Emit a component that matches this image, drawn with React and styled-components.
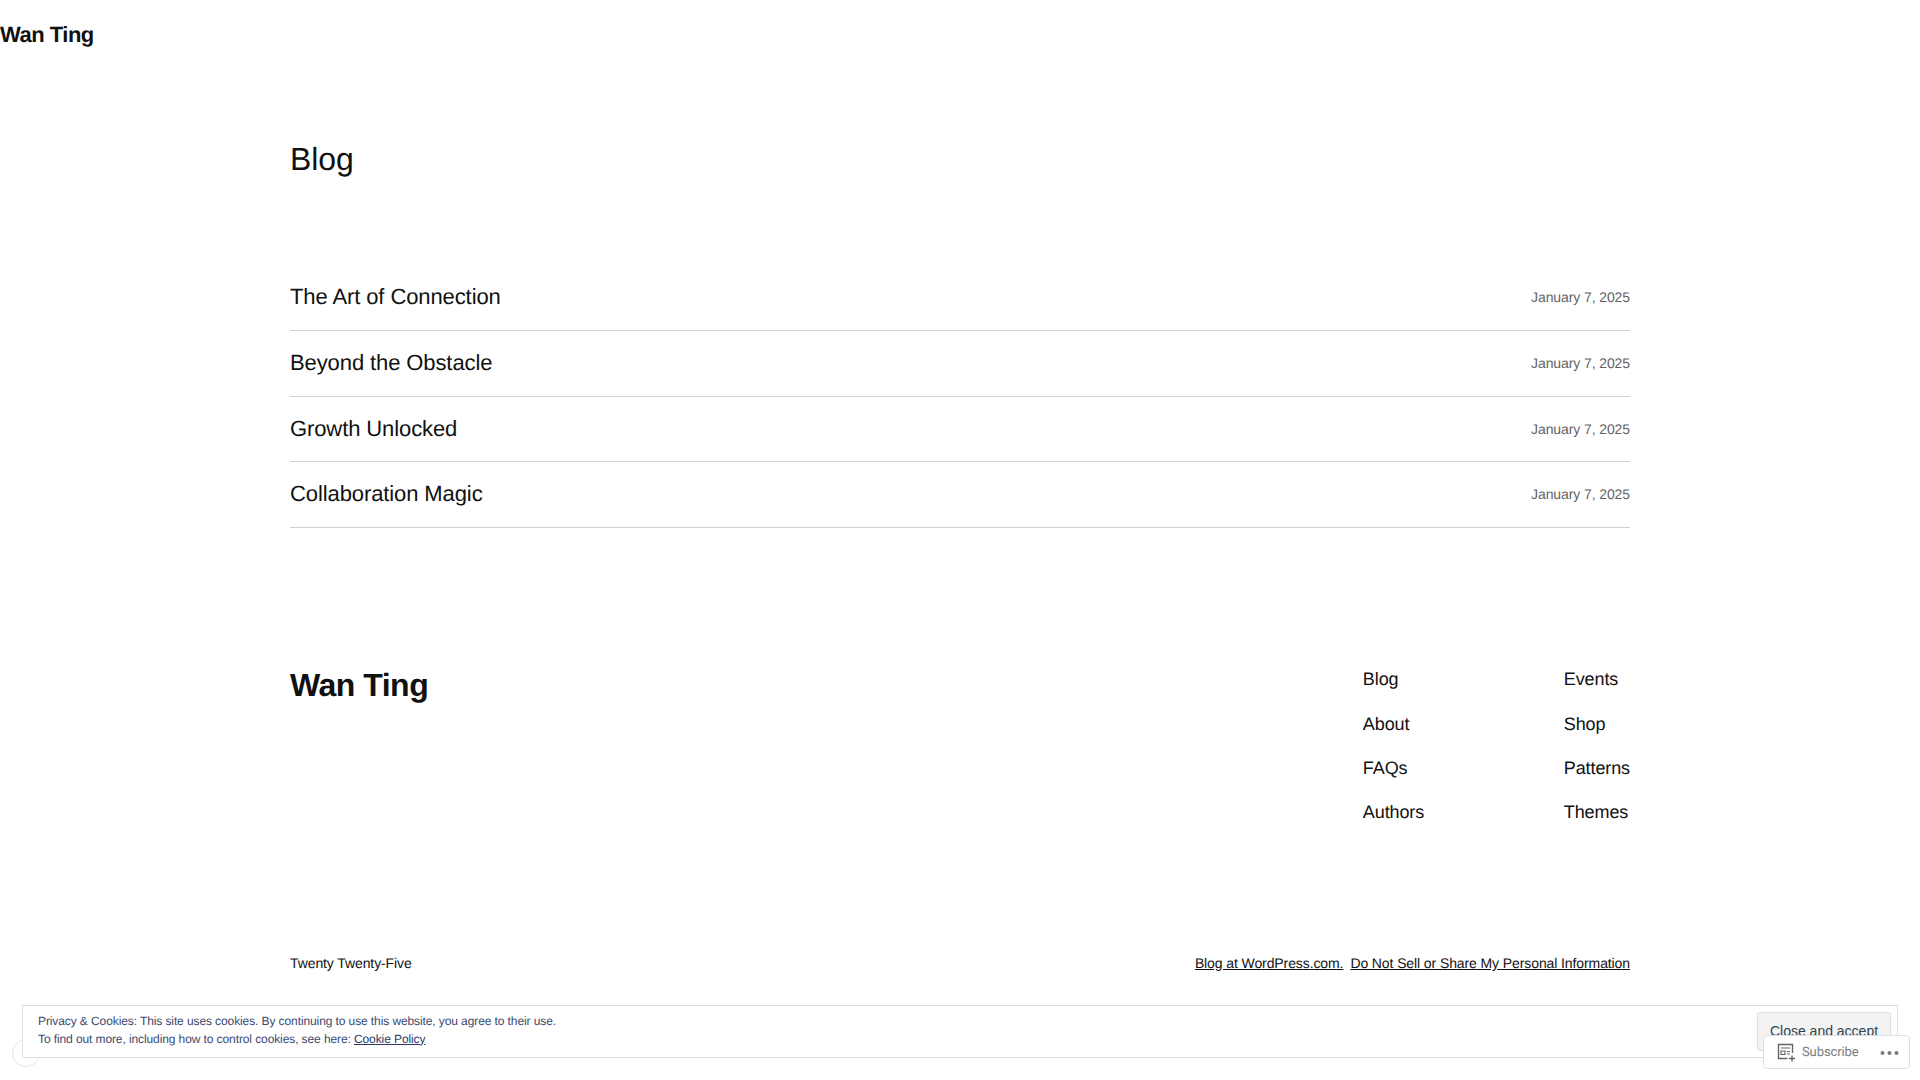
import React from "react";
import styled, { createGlobalStyle } from "styled-components";

const Global = createGlobalStyle`
  html, body { margin: 0; padding: 0; background: #fff; }
  body {
    font-family: "Liberation Sans", Arial, sans-serif;
    color: #111;
    letter-spacing: -0.1px;
    text-rendering: geometricPrecision;
    overflow: hidden;
  }
  a { color: inherit; }
`;

const Page = styled.div`
  height: 1080px;
  overflow: hidden;
`;

const Header = styled.header`
  height: 70px;
  display: flex;
  align-items: center;
`;

const SiteTitle = styled.div`
  font-size: 22px;
  font-weight: 700;
  letter-spacing: -0.5px;
  line-height: 1;
`;

const Main = styled.main`
  width: 1340px;
  margin: 0 auto;
`;

const Heading = styled.h1`
  margin: 0;
  padding-top: 67px;
  font-size: 32px;
  font-weight: 400;
  line-height: 44px;
`;

const PostList = styled.div`
  margin-top: 84.2px;
`;

const PostRow = styled.div`
  display: flex;
  align-items: center;
  justify-content: space-between;
  height: 64.07px;
  padding-bottom: 0.6px;
  border-bottom: 1px solid #d0d0d0;
`;

const PostTitle = styled.div`
  font-size: 22px;
`;

const PostDate = styled.div`
  font-size: 14px;
  color: #636363;
`;

const Footer = styled.footer`
  margin-top: 138.5px;
  display: flex;
  justify-content: space-between;
`;

const FooterTitle = styled.div`
  font-size: 32px;
  font-weight: 700;
  letter-spacing: -0.5px;
  line-height: 38px;
`;

const NavColumns = styled.div`
  display: flex;
  gap: 139.6px;
`;

const NavColumn = styled.div`
  display: flex;
  flex-direction: column;
  gap: 18px;
`;

const NavLink = styled.a`
  font-size: 18px;
  line-height: 26.3px;
  text-decoration: none;
`;

const FooterBottom = styled.div`
  margin-top: 127.6px;
  display: flex;
  justify-content: space-between;
  font-size: 14px;
  line-height: 20px;
`;

const FooterLinks = styled.div`
  display: flex;
  gap: 7px;
`;

const CookieBar = styled.div`
  position: fixed;
  left: 22px;
  right: 22px;
  bottom: 22px;
  height: 53px;
  box-sizing: border-box;
  border: 1px solid #dedede;
  background: #fff;
  display: flex;
  align-items: center;
  justify-content: space-between;
  padding: 0 6px 0 15px;
`;

const CookieText = styled.div`
  font-size: 12px;
  line-height: 18px;
  color: #3b4a70;
  margin-top: -4px;
`;

const CookieLink = styled.a`
  color: #2c3a63;
  text-decoration: underline;
`;

const CloseButton = styled.button`
  height: 39px;
  width: 134px;
  padding: 0 0 1px;
  background: #f3f3f3;
  border: 1px solid #dedede;
  border-radius: 3px;
  color: #2e4453;
  font: 14px "Liberation Sans", Arial, sans-serif;
`;

const Circle = styled.div`
  position: fixed;
  left: 12px;
  bottom: 13px;
  width: 26px;
  height: 26px;
  border: 1px solid #e4e4e4;
  border-radius: 50%;
`;

const SubscribeBar = styled.div`
  position: fixed;
  right: 10px;
  bottom: 11px;
  width: 147px;
  height: 34px;
  box-sizing: border-box;
  background: #fff;
  border: 1px solid #e0e0e0;
  border-radius: 4px;
  display: flex;
  align-items: center;
  padding: 1px 10px 0 13px;
  color: #787c82;
  font: 13px "Roboto", "Liberation Sans", sans-serif;
`;

const SubscribeLabel = styled.span`
  margin-left: 6px;
  flex: 1;
`;

const Dots = styled.svg`
  display: block;
`;

const ReaderIcon = () => (
  <svg width="19" height="19" viewBox="0 0 19 19" fill="none" stroke="#636669">
    <path d="M15.5 10V1.5H1.5v14h9" strokeWidth="1.4" />
    <path d="M4 5h9M4 8h4v3.5H4zM10 8.5h3M10 11h3" strokeWidth="1.2" />
    <path d="M15 12.5v6M12 15.5h6" strokeWidth="1.4" />
  </svg>
);

const posts = ["The Art of Connection", "Beyond the Obstacle", "Growth Unlocked", "Collaboration Magic"];
const navOne = ["Blog", "About", "FAQs", "Authors"];
const navTwo = ["Events", "Shop", "Patterns", "Themes"];

const App = () => {
  return (
    <Page>
      <Global />
      <Header>
        <SiteTitle>Wan Ting</SiteTitle>
      </Header>
      <Main>
        <Heading>Blog</Heading>
        <PostList>
          {posts.map((title) => (
            <PostRow key={title}>
              <PostTitle>{title}</PostTitle>
              <PostDate>January 7, 2025</PostDate>
            </PostRow>
          ))}
        </PostList>
        <Footer>
          <FooterTitle>Wan Ting</FooterTitle>
          <NavColumns>
            <NavColumn>
              {navOne.map((item) => <NavLink key={item}>{item}</NavLink>)}
            </NavColumn>
            <NavColumn>
              {navTwo.map((item) => <NavLink key={item}>{item}</NavLink>)}
            </NavColumn>
          </NavColumns>
        </Footer>
        <FooterBottom>
          <span>Twenty Twenty-Five</span>
          <FooterLinks>
            <a href="#">Blog at WordPress.com.</a>
            <a href="#">Do Not Sell or Share My Personal Information</a>
          </FooterLinks>
        </FooterBottom>
      </Main>
      <Circle />
      <CookieBar>
        <CookieText>
          Privacy &amp; Cookies: This site uses cookies. By continuing to use this website, you agree to their use.
          <br />
          To find out more, including how to control cookies, see here: <CookieLink href="#">Cookie Policy</CookieLink>
        </CookieText>
        <CloseButton>Close and accept</CloseButton>
      </CookieBar>
      <SubscribeBar>
        <ReaderIcon />
        <SubscribeLabel>Subscribe</SubscribeLabel>
        <Dots width="19" height="6" viewBox="0 0 19 6" fill="#787c82">
          <circle cx="2.5" cy="3" r="2" />
          <circle cx="9.5" cy="3" r="2" />
          <circle cx="16.5" cy="3" r="2" />
        </Dots>
      </SubscribeBar>
    </Page>
  );
};

export default App;
